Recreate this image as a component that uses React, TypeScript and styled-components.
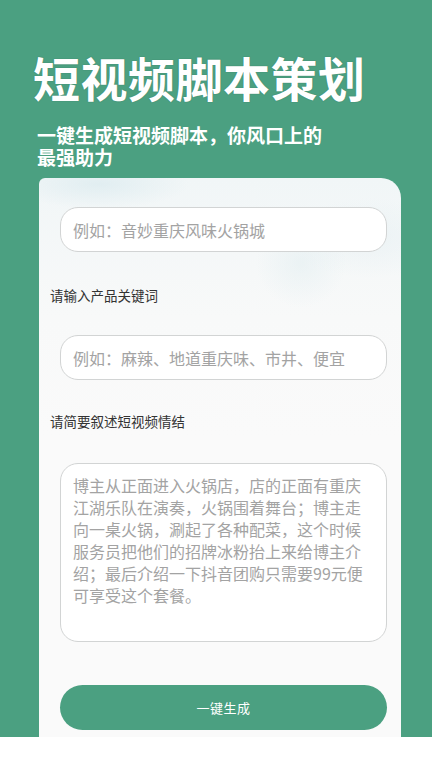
import React from "react";
import styled, { createGlobalStyle } from "styled-components";

const GlobalStyle = createGlobalStyle`
  * { box-sizing: border-box; }
  body {
    margin: 0;
    background: #ffffff;
    font-family: "Noto Sans CJK SC", "Noto Sans", sans-serif;
  }
`;

const Page = styled.div`
  width: 432px;
  min-height: 768px;
  display: flex;
  flex-direction: column;
  background: #ffffff;
`;

const Hero = styled.div`
  height: 737px;
  background: #4ba081;
  padding-top: 53px;
  display: flex;
  flex-direction: column;
  overflow: hidden;
`;

const Title = styled.h1`
  margin: 0 0 0 33px;
  font-size: 47px;
  line-height: 47px;
  font-weight: 700;
  color: #ffffff;
  letter-spacing: 0.5px;
  text-shadow: 0 0 1px rgba(20, 60, 45, 0.5);
`;

const Subtitle = styled.p`
  margin: 24px 0 0 37px;
  width: 300px;
  font-size: 19px;
  line-height: 22px;
  font-weight: 700;
  color: #ffffff;
`;

const Card = styled.div`
  flex: 1;
  margin: 10px 0 0 39px;
  width: 362px;
  border-radius: 6px 20px 0 0;
  background:
    radial-gradient(circle at 262px 85px, rgba(222, 236, 239, 0.45) 0, rgba(222, 236, 239, 0) 45px),
    radial-gradient(ellipse 90px 25px at 60px 6px, rgba(214, 232, 237, 0.6) 0, rgba(214, 232, 237, 0) 100%),
    radial-gradient(ellipse 80px 40px at 330px 60px, rgba(224, 236, 240, 0.4) 0, rgba(224, 236, 240, 0) 100%),
    linear-gradient(180deg, #f1f6f7 0, #f8f9f9 140px, #fafafa 260px);
  padding: 29px 14px 0 21px;
  display: flex;
  flex-direction: column;
`;

const Field = styled.input`
  display: block;
  width: 327px;
  height: 45px;
  border: 1px solid #d2d4d4;
  border-radius: 18px;
  background: #ffffff;
  padding: 0 12px;
  font-family: inherit;
  font-size: 16px;
  color: #333333;
  outline: none;
  &::placeholder {
    color: #a3a3a3;
  }
`;

const Label = styled.div<{ $top: number; $bottom: number }>`
  margin: ${(p) => p.$top}px 0 ${(p) => p.$bottom}px -10px;
  font-size: 13.5px;
  line-height: 20px;
  color: #333333;
`;

const Story = styled.textarea`
  display: block;
  width: 327px;
  height: 179px;
  border: 1px solid #d2d4d4;
  border-radius: 18px;
  background: #ffffff;
  padding: 10px 12px;
  font-family: inherit;
  font-size: 16px;
  line-height: 22px;
  color: #333333;
  resize: none;
  outline: none;
  &::placeholder {
    color: #a3a3a3;
  }
`;

const Submit = styled.button`
  margin-top: 43px;
  width: 327px;
  height: 45px;
  border: none;
  border-radius: 23px;
  background: #4ba081;
  color: #ffffff;
  font-family: inherit;
  font-size: 13px;
  letter-spacing: 0.5px;
  cursor: pointer;
`;

const Footer = styled.div`
  height: 31px;
  background: #ffffff;
`;

export default function App() {
  return (
    <Page>
      <GlobalStyle />
      <Hero>
        <Title>短视频脚本策划</Title>
        <Subtitle>一键生成短视频脚本，你风口上的最强助力</Subtitle>
        <Card>
          <Field type="text" placeholder="例如：音妙重庆风味火锅城" />
          <Label $top={33} $bottom={30}>请输入产品关键词</Label>
          <Field type="text" placeholder="例如：麻辣、地道重庆味、市井、便宜" />
          <Label $top={31} $bottom={32}>请简要叙述短视频情结</Label>
          <Story placeholder="博主从正面进入火锅店，店的正面有重庆江湖乐队在演奏，火锅围着舞台；博主走向一桌火锅，涮起了各种配菜，这个时候服务员把他们的招牌冰粉抬上来给博主介绍；最后介绍一下抖音团购只需要99元便可享受这个套餐。" />
          <Submit type="button">一键生成</Submit>
        </Card>
      </Hero>
      <Footer />
    </Page>
  );
}
